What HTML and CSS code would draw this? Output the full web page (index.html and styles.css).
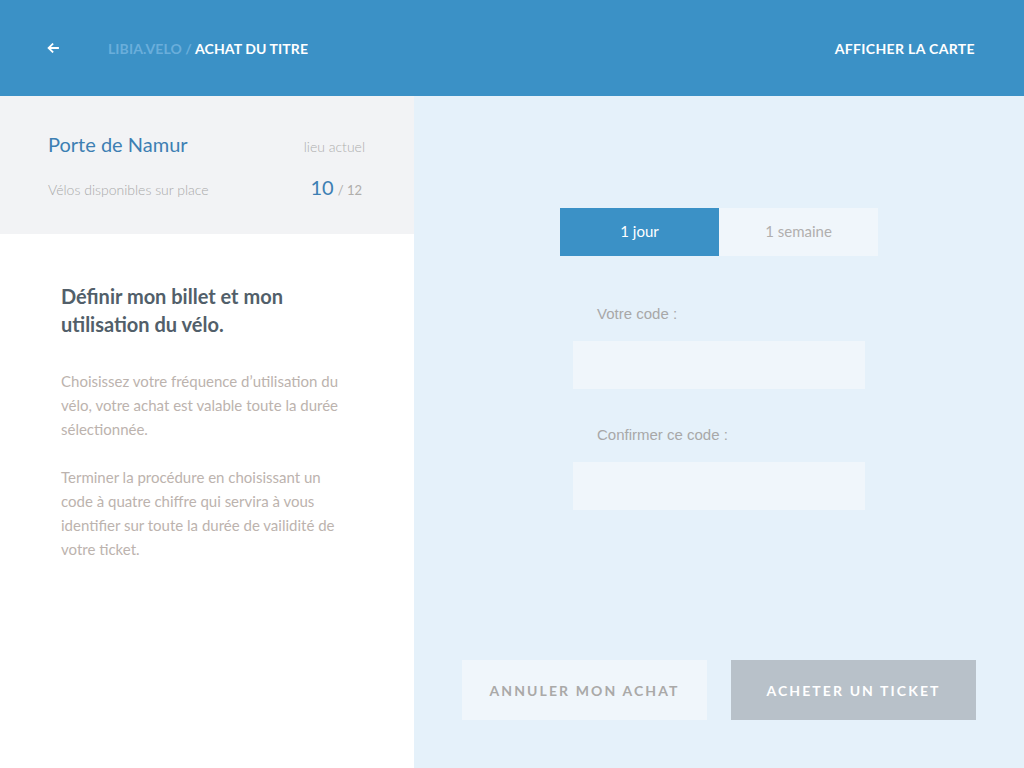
FILE: index.html
```html
<!DOCTYPE html>
<html lang="fr">
<head>
<meta charset="utf-8">
<title>Libia.velo - Achat du titre</title>
<link rel="stylesheet" href="styles.css">
</head>
<body>
<header class="topbar">
  <div class="topbar-left">
    <a class="back" href="#" aria-label="Retour">
      <svg width="12" height="10" viewBox="0 0 12 10"><path d="M11 5H2M5.5 1.2L1.6 5l3.9 3.8" fill="none" stroke="#fff" stroke-width="1.8" stroke-linecap="square"/></svg>
    </a>
    <div class="crumbs"><span class="crumb-root">LIBIA.VELO /</span> <span class="crumb-current">ACHAT DU TITRE</span></div>
  </div>
  <a class="map-link" href="#">AFFICHER LA CARTE</a>
</header>
<main class="main">
  <aside class="side">
    <section class="station">
      <div class="station-row">
        <h2 class="station-name">Porte de Namur</h2>
        <span class="station-tag">lieu actuel</span>
      </div>
      <div class="station-row station-row-2">
        <span class="station-label">Vélos disponibles sur place</span>
        <span class="station-count"><span class="count-main">10</span> <span class="count-total">/ 12</span></span>
      </div>
    </section>
    <section class="intro">
      <h1 class="intro-title">Définir mon billet et mon utilisation du vélo.</h1>
      <p class="intro-text">Choisissez votre fréquence d’utilisation du vélo, votre achat est valable toute la durée sélectionnée.</p>
      <p class="intro-text">Terminer la procédure en choisissant un code à quatre chiffre qui servira à vous identifier sur toute la durée de vailidité de votre ticket.</p>
    </section>
  </aside>
  <section class="panel">
    <div class="tabs">
      <button class="tab tab-active">1 jour</button>
      <button class="tab">1 semaine</button>
    </div>
    <div class="form">
      <label class="field-label">Votre code :</label>
      <div class="field-input"></div>
      <label class="field-label field-label-2">Confirmer ce code :</label>
      <div class="field-input"></div>
    </div>
    <div class="actions">
      <button class="btn btn-cancel">ANNULER MON ACHAT</button>
      <button class="btn btn-buy">ACHETER UN TICKET</button>
    </div>
  </section>
</main>
</body>
</html>
```
FILE: styles.css
```css
* { box-sizing: border-box; }
html, body { margin: 0; padding: 0; }
body {
  width: 1024px;
  height: 768px;
  overflow: hidden;
  font-family: "Lato", "Open Sans", sans-serif;
  background: #fff;
}
.topbar {
  height: 96px;
  background: #3b91c6;
  display: flex;
  align-items: center;
  justify-content: space-between;
  padding: 0 49px 0 47px;
}
.topbar-left { display: flex; align-items: center; }
.back { display: flex; width: 14px; height: 14px; align-items: center; margin-right: 47px; }
.crumbs { font-weight: 700; font-size: 14px; letter-spacing: 0.1px; }
.crumb-root { color: #6aaedb; }
.crumb-current { color: #fff; }
.map-link { color: #fff; font-weight: 700; font-size: 14px; text-decoration: none; letter-spacing: 0.35px; }

.main { display: flex; height: 672px; }
.side { width: 414px; background: #fff; }
.station {
  height: 138px;
  background: #f2f3f5;
  padding: 36px 49px 0 48px;
}
.station-row { display: flex; justify-content: space-between; align-items: baseline; }
.station-row-2 { margin-top: 19px; padding-right: 3px; }
.station-name { margin: 0; font-weight: 400; font-size: 20px; color: #3d7fb3; }
.station-tag { font-size: 14px; color: #aeaeae; font-weight: 300; }
.station-label { font-size: 14px; color: #a9a9a9; font-weight: 300; }
.count-main { font-size: 20px; color: #3d7fb3; }
.count-total { font-size: 13px; color: #b0aeab; }

.intro { padding: 48px 0 0 61px; width: 353px; }
.intro-title {
  margin: 0 0 31px;
  font-size: 20px;
  line-height: 28px;
  font-weight: 700;
  color: #525f6a;
  width: 240px;
}
.intro-text {
  margin: 0 0 24px;
  font-size: 15px;
  line-height: 24px;
  color: #bcb3ae;
  font-weight: 400;
}

.panel {
  flex: 1;
  background: #e5f1fa;
  display: flex;
  flex-direction: column;
  align-items: center;
  padding: 112px 48px 48px;
}
.tabs { display: flex; }
.tab {
  width: 159px;
  height: 48px;
  border: 0;
  margin: 0;
  padding: 0 0 2px;
  background: #f0f6fb;
  color: #b0afae;
  font-family: "Lato", sans-serif;
  font-size: 15px;
}
.tab-active { background: #3b91c6; color: #fff; }
.form { width: 292px; display: flex; flex-direction: column; margin-top: 48px; }
.field-label {
  font-family: "Liberation Sans", Arial, sans-serif;
  font-size: 15px;
  color: #a8a8a8;
  padding-left: 24px;
  height: 20px;
  line-height: 20px;
  margin-bottom: 17px;
}
.field-label-2 { margin-top: 36px; }
.field-input { height: 48px; background: #f0f6fb; }
.actions {
  margin-top: auto;
  width: 100%;
  display: flex;
  justify-content: space-between;
}
.btn {
  width: 245px;
  height: 60px;
  border: 0;
  font-family: "Lato", sans-serif;
  font-weight: 700;
  font-size: 14px;
  letter-spacing: 2.1px;
}
.btn-cancel { background: #f0f6fb; color: #aaa9a8; }
.btn-buy { background: #b8c1c9; color: #fff; }
```
